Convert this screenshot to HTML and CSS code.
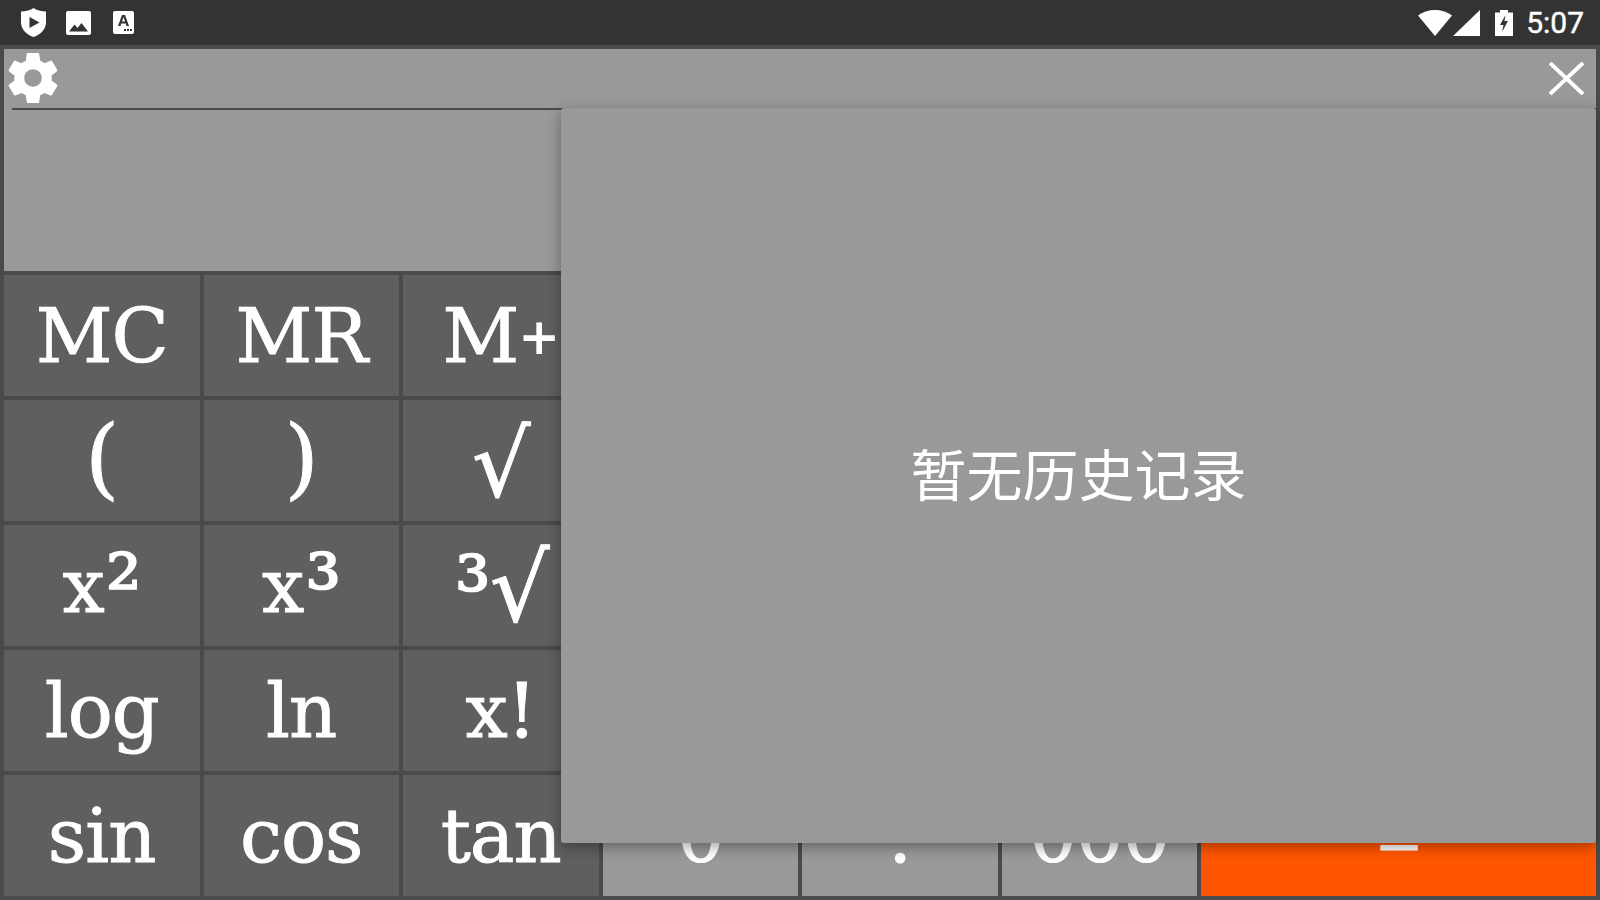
FILE: index.html
```html
<!DOCTYPE html>
<html lang="zh">
<head>
  <meta charset="UTF-8" />
  <title>计算器</title>
  <link rel="stylesheet" href="styles.css">
</head>
<body>
  <div class="statusbar">
    <div class="status-left">
      <svg class="ic-shield" viewBox="0 0 25 29"><path fill="#fff" d="M12.500 0C15.500 2 20 3.400 25 3.600V14c0 7-5 12.400-12.500 15C5 26.400 0 21 0 14V3.600C5 3.400 9.500 2 12.500 0z"/><path fill="#333" d="M8.500 9 18.500 14.500 8.500 20z"/></svg>
      <svg class="ic-image" viewBox="0 0 25 24"><rect width="25" height="24" rx="2" fill="#fff"/><path fill="#333" d="M3 20.500 8.500 13.500 11.500 17 15.500 12 22 20.500z"/></svg>
      <svg class="ic-badge" viewBox="0 0 21 23"><rect width="21" height="23" rx="2" fill="#fff"/><path fill="#333" d="M5 15 9 4h3l4 11h-2.500l-.8-2.400H8.300L7.500 15zM9 10.600h3L10.500 6.300z"/><rect x="11" y="18" width="2" height="2" fill="#333"/><rect x="14" y="18" width="2" height="2" fill="#333"/><rect x="17" y="18" width="2" height="2" fill="#333"/></svg>
    </div>
    <div class="status-right">
      <svg class="ic-wifi" viewBox="0 0 34 26"><path fill="#fff" d="M17 26 0 5.500C4.500 2 10.500 0 17 0s12.500 2 17 5.500z"/></svg>
      <svg class="ic-signal" viewBox="0 0 27 26"><path fill="#fff" d="M0 26 27 0v26z"/></svg>
      <svg class="ic-battery" viewBox="0 0 18 26"><path fill="#fff" d="M5 0h8v2.500h5V26H0V2.500h5z"/><path fill="#333" d="M10.500 5 5 15h3.500L7 22l6-11H9.500z"/></svg>
      <span class="clock">5:07</span>
    </div>
  </div>

  <div class="frame">
    <div class="display">
      <div class="toolbar">
        <svg class="ic-gear" viewBox="0 0 24 24"><path fill="#fff" fill-rule="evenodd" d="M19.430 12.980c.04-.32.07-.64.07-.98s-.03-.66-.07-.98l2.110-1.650c.19-.15.24-.42.12-.64l-2-3.460c-.12-.22-.39-.3-.61-.22l-2.490 1c-.52-.4-1.080-.73-1.690-.98l-.38-2.650C14.460 2.180 14.250 2 14 2h-4c-.25 0-.46.18-.49.42l-.38 2.650c-.61.25-1.170.59-1.690.98l-2.490-1c-.23-.09-.49 0-.61.22l-2 3.460c-.13.22-.07.49.12.64l2.110 1.650c-.04.32-.07.65-.07.98s.03.66.07.98l-2.110 1.650c-.19.15-.24.42-.12.64l2 3.460c.12.22.39.3.61.22l2.490-1c.52.4 1.080.73 1.690.98l.38 2.650c.03.24.24.42.49.42h4c.25 0 .46-.18.49-.42l.38-2.650c.61-.25 1.170-.59 1.690-.98l2.490 1c.23.09.49 0 .61-.22l2-3.460c.12-.22.07-.49-.12-.64zM12 15.500c-1.930 0-3.500-1.570-3.500-3.500s1.570-3.500 3.500-3.500 3.500 1.570 3.500 3.500-1.570 3.500-3.500 3.500z"/></svg>
        <svg class="ic-close" viewBox="0 0 35 33"><path stroke="#fff" stroke-width="4" fill="none" d="M1 1 34 32M34 1 1 32"/></svg>
      </div>
    </div>

    <div class="keys">
      <div class="key">MC</div><div class="key">MR</div><div class="key">M<span class="plus">+</span></div><div class="key"></div><div class="key"></div><div class="key"></div><div class="key wide"></div>
      <div class="key tall">(</div><div class="key tall">)</div><div class="key root">√</div><div class="key"></div><div class="key"></div><div class="key"></div><div class="key wide"></div>
      <div class="key">x<span class="sup">²</span></div><div class="key">x<span class="sup">³</span></div><div class="key root-3"><span class="sup">³</span><span class="bigroot">√</span></div><div class="key"></div><div class="key"></div><div class="key"></div><div class="key wide"></div>
      <div class="key">log</div><div class="key">ln</div><div class="key">x!</div><div class="key"></div><div class="key"></div><div class="key"></div><div class="key wide"></div>
      <div class="key">sin</div><div class="key">cos</div><div class="key">tan</div><div class="key light">0</div><div class="key light">.</div><div class="key light">000</div><div class="key wide equals">=</div>
    </div>
  </div>

  <div class="history">暂无历史记录</div>
</body>
</html>
```

FILE: styles.css
```css
* {
  box-sizing: border-box;
}
body {
  margin: 0;
  width: 1600px;
  height: 900px;
  overflow: hidden;
  background: #4a4a4a;
  display: flex;
  flex-direction: column;
  font-family: "DejaVu Serif", "Liberation Serif", serif;
}
svg {
  display: block;
}

.statusbar {
  height: 45px;
  background: #333;
  display: flex;
  justify-content: space-between;
  align-items: center;
  padding: 0 16px 0 21px;
}
.status-left,
.status-right {
  display: flex;
  align-items: center;
}
.ic-shield {
  width: 25px;
  height: 29px;
  margin-right: 20px;
}
.ic-image {
  width: 25px;
  height: 24px;
  margin-right: 22px;
}
.ic-badge {
  width: 21px;
  height: 23px;
}
.ic-wifi {
  width: 34px;
  height: 26px;
  margin-right: 1px;
}
.ic-signal {
  width: 27px;
  height: 26px;
  margin-right: 15px;
}
.ic-battery {
  width: 18px;
  height: 26px;
  margin-right: 13px;
}
.clock {
  font-family: Roboto, sans-serif;
  font-size: 30px;
  color: #fff;
  -webkit-text-stroke: 0.4px #fff;
}

.frame {
  flex: 1;
  padding: 4px;
  display: flex;
  flex-direction: column;
  gap: 4px;
}
.display {
  height: 222px;
  background: #999;
}
.toolbar {
  height: 61px;
  margin-left: 8px;
  border-bottom: 2px solid #4a4a4a;
  display: flex;
  justify-content: space-between;
  align-items: flex-start;
}
.ic-gear {
  flex: none;
  width: 60px;
  height: 60px;
  margin: -1px 0 0 -9px;
}
.ic-close {
  width: 35px;
  height: 33px;
  margin: 13px 12px 0 0;
}

.keys {
  flex: 1;
  display: grid;
  grid-template-columns: repeat(8, 1fr);
  grid-auto-rows: 121px;
  gap: 4px;
}
.key {
  background: #5f5f5f;
  color: #fff;
  font-size: 75px;
  letter-spacing: -1px;
  padding-top: 2px;
  -webkit-text-stroke: 0.9px #fff;
  display: flex;
  align-items: center;
  justify-content: center;
  line-height: 1;
}
.key.wide {
  grid-column: span 2;
}
.key.light {
  background: #999;
}
.key.equals {
  background: #ff5500;
  font-size: 58px;
  padding-top: 9px;
}
.key.tall {
  font-size: 88px;
  padding: 0 0 6px;
}
.key.root {
  font-size: 92px;
  padding: 8px 0 0;
}
.key.root-3 {
  padding: 6px 0 0;
}
.plus {
  font-size: 50px;
  font-weight: bold;
  -webkit-text-stroke: 0;
}
.sup {
  font-size: 90px;
  margin-left: 2px;
  -webkit-text-stroke: 1.6px #fff;
}
.bigroot {
  font-size: 94px;
}

.history {
  position: absolute;
  left: 561px;
  top: 108px;
  width: 1035px;
  height: 735px;
  padding-bottom: 9px;
  background: #999;
  border-radius: 3px;
  box-shadow: 0 4px 14px rgba(0, 0, 0, 0.35);
  color: #fff;
  font-family: "Noto Sans CJK SC", sans-serif;
  font-size: 56px;
  display: flex;
  align-items: center;
  justify-content: center;
}
```
